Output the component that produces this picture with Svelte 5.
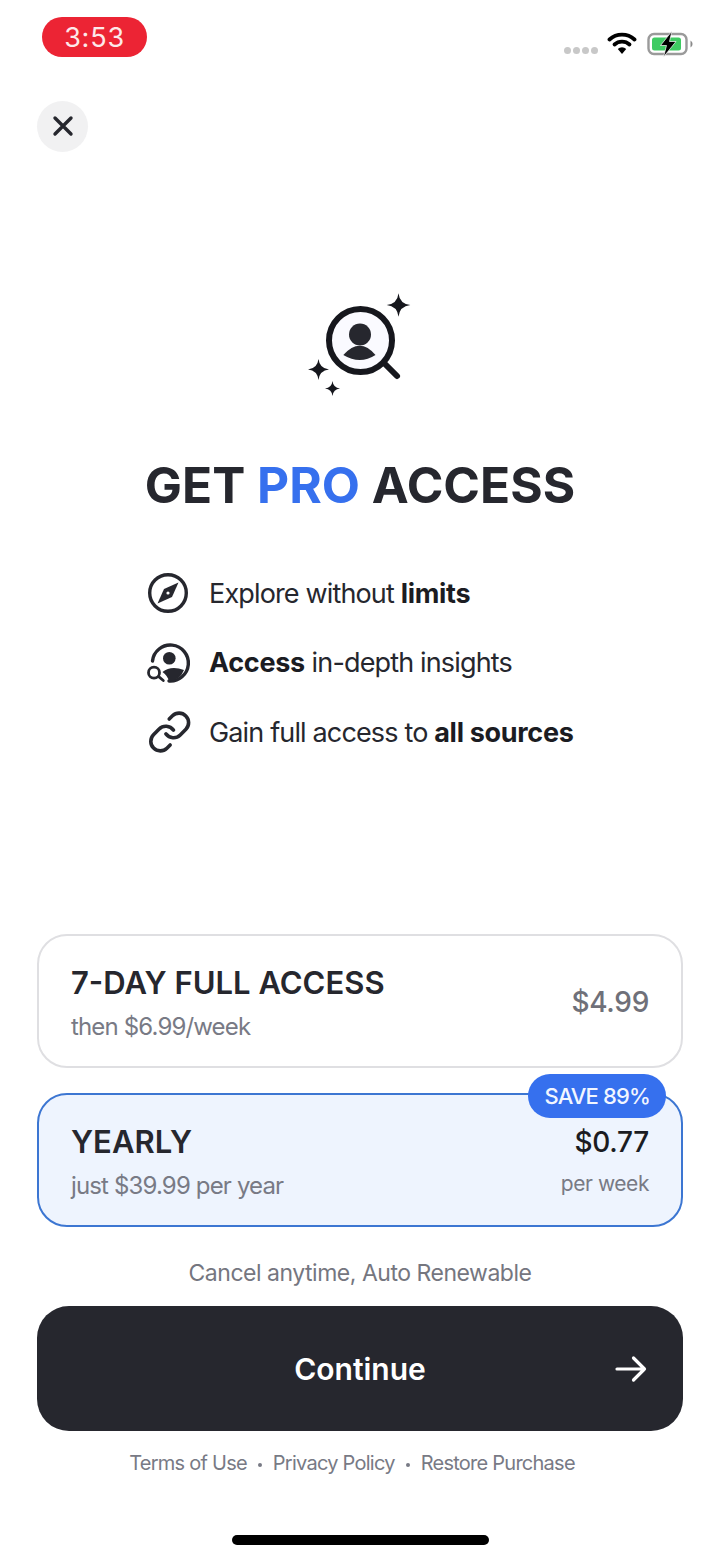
<script>
  const features = [
    { id: 'compass', parts: [['Explore without ', false], ['limits', true]] },
    { id: 'person', parts: [['Access', true], [' in-depth insights', false]] },
    { id: 'link', parts: [['Gain full access to ', false], ['all sources', true]] }
  ];

  function sparkle(x, y, r) {
    const k = r * 0.1;
    return `M${x} ${y - r} Q${x + k} ${y - k} ${x + r} ${y} Q${x + k} ${y + k} ${x} ${y + r} Q${x - k} ${y + k} ${x - r} ${y} Q${x - k} ${y - k} ${x} ${y - r} Z`;
  }
</script>

<div class="page">
  <header class="status">
    <div class="time">3:53</div>
    <div class="indicators">
      <div class="dots"><i></i><i></i><i></i><i></i></div>
      <svg class="wifi" width="30" height="24" viewBox="0 0 30 24">
        <path d="M2.500 8.500 A18.500 18.500 0 0 1 27.500 8.500" fill="none" stroke="#000" stroke-width="3.800" stroke-linecap="round"/>
        <path d="M7.500 13.500 A11 11 0 0 1 22.500 13.500" fill="none" stroke="#000" stroke-width="3.800" stroke-linecap="round"/>
        <path d="M15 23 L10.800 18 A6 6 0 0 1 19.200 18 Z" fill="#000"/>
      </svg>
      <svg class="battery" width="48" height="28" viewBox="0 0 48 28">
        <rect x="1.500" y="4" width="38" height="20" rx="5.500" fill="none" stroke="#9a9a9a" stroke-width="2.400"/>
        <rect x="5" y="7.500" width="29" height="13" rx="2.500" fill="#3ecb62"/>
        <path d="M43.500 10.500 a4 4 0 0 1 0 7 z" fill="#8a8a8a"/>
        <path d="M25 1 L13.500 15.500 L19.500 15.500 L16.500 27 L29 11.500 L22.500 11.500 Z" fill="#000" stroke="#fff" stroke-width="0.700"/>
      </svg>
    </div>
  </header>

  <button class="close" aria-label="Close">
    <svg width="22" height="22" viewBox="0 0 22 22">
      <path d="M3 3 L19 19 M19 3 L3 19" stroke="#26272e" stroke-width="3.400" stroke-linecap="round"/>
    </svg>
  </button>

  <div class="hero">
    <svg width="110" height="112" viewBox="0 0 110 112">
      <circle cx="52.500" cy="54.500" r="31.500" fill="#fafaff" stroke="#16171d" stroke-width="6"/>
      <path d="M76 77 L89 90" stroke="#16171d" stroke-width="6" stroke-linecap="round"/>
      <circle cx="52" cy="48.500" r="11" fill="#26272e"/>
      <path d="M35.300 69 Q52 50.500 67.500 69 Q52 79 35.300 69 Z" fill="#26272e"/>
      <path d={sparkle(90.500, 19, 11.800)} fill="#16171d"/>
      <path d={sparkle(10.500, 83.500, 10.500)} fill="#16171d"/>
      <path d={sparkle(24.500, 102.500, 7.500)} fill="#16171d"/>
    </svg>
  </div>

  <h1>GET <span>PRO</span> ACCESS</h1>

  <ul class="features">
    {#each features as f}
      <li>
        <svg class="ficon" width="46" height="46" viewBox="0 0 46 46">
          {#if f.id === 'compass'}
            <circle cx="23" cy="23" r="18.300" fill="none" stroke="#26272e" stroke-width="3.400"/>
            <path d="M33.500 12.500 L27 27 L12.500 33.500 L19 19 Z" fill="#26272e"/>
            <circle cx="23" cy="23" r="1.600" fill="#fff"/>
          {:else if f.id === 'person'}
            <path d="M7.500 21 A18 18 0 1 1 24 41" fill="none" stroke="#26272e" stroke-width="3.400" stroke-linecap="round"/>
            <circle cx="24.300" cy="18.300" r="6.300" fill="#26272e"/>
            <path d="M17.500 32 Q26 25 39 30 A18 18 0 0 1 24 41.500 Q23 36 17.500 32 Z" fill="#26272e"/>
            <circle cx="9" cy="32.700" r="5.500" fill="#fff" stroke="#26272e" stroke-width="2.800"/>
            <path d="M13.700 36.700 L18.300 40.500" stroke="#26272e" stroke-width="2.800" stroke-linecap="round"/>
          {:else}
            <g transform="translate(24.700 23) scale(1.900) translate(-12 -12)" fill="none" stroke="#26272e" stroke-width="1.900" stroke-linecap="round" stroke-linejoin="round">
              <path d="M10 13a5 5 0 0 0 7.540.54l3-3a5 5 0 0 0-7.070-7.070l-1.720 1.710"/>
              <path d="M14 11a5 5 0 0 0-7.540-.54l-3 3a5 5 0 0 0 7.070 7.070l1.710-1.710"/>
            </g>
          {/if}
        </svg>
        <span class="ftext">{#each f.parts as p}{#if p[1]}<b>{p[0]}</b>{:else}{p[0]}{/if}{/each}</span>
      </li>
    {/each}
  </ul>

  <div class="plans">
    <div class="plan">
      <div class="col">
        <div class="name">7-DAY FULL ACCESS</div>
        <div class="sub">then $6.99/week</div>
      </div>
      <div class="price muted">$4.99</div>
    </div>
    <div class="plan selected">
      <div class="badge">SAVE 89%</div>
      <div class="col">
        <div class="name">YEARLY</div>
        <div class="sub">just $39.99 per year</div>
      </div>
      <div class="col right">
        <div class="price">$0.77</div>
        <div class="sub small">per week</div>
      </div>
    </div>
  </div>

  <p class="cancel">Cancel anytime, Auto Renewable</p>

  <button class="cta">
    <span>Continue</span>
    <svg width="34" height="28" viewBox="0 0 34 28">
      <path d="M3 14 H30.500 M19.500 3 L30.500 14 L19.500 25" fill="none" stroke="#fff" stroke-width="3.200" stroke-linecap="round" stroke-linejoin="round"/>
    </svg>
  </button>

  <footer class="links">
    <span>Terms of Use</span><i></i><span>Privacy Policy</span><i></i><span>Restore Purchase</span>
  </footer>

  <div class="home"></div>
</div>

<style>
  :global(body) { margin: 0; background: #fff; }
  .page {
    width: 720px;
    height: 1560px;
    box-sizing: border-box;
    padding: 17px 37px 0;
    background: #fff;
    font-family: Inter, "Liberation Sans", sans-serif;
    color: #26272e;
    display: flex;
    flex-direction: column;
    overflow: hidden;
  }
  .status {
    display: flex;
    justify-content: space-between;
    align-items: flex-start;
    height: 84px;
    margin-right: -15px;
    padding: 0 3px 0 5px;
  }
  .time {
    width: 105px;
    height: 40px;
    border-radius: 20px;
    background: #ec2434;
    color: #fde9ea;
    font-size: 27px;
    letter-spacing: 0.800px;
    line-height: 42px;
    text-align: center;
  }
  .indicators {
    display: flex;
    align-items: center;
    margin-top: 13px;
  }
  .dots { display: flex; gap: 2px; margin-top: 13px; margin-right: 10px; }
  .dots i { width: 7px; height: 7px; border-radius: 50%; background: #c8c8c8; display: block; }
  .wifi { margin: -2px 10px 0 -1px; }
  .close {
    width: 51px;
    height: 51px;
    border: 0;
    padding: 0 0 2px;
    border-radius: 50%;
    background: #f1f1f2;
    display: flex;
    align-items: center;
    justify-content: center;
  }
  .hero {
    margin-top: 134px;
    display: flex;
    justify-content: center;
    padding-left: 6px;
    height: 112px;
  }
  h1 {
    margin: 57px 0 0;
    font-size: 49.600px;
    line-height: 60px;
    font-weight: 700;
    text-align: center;
    color: #26272e;
    letter-spacing: 0;
  }
  h1 span { color: #3670ee; }
  .features {
    list-style: none;
    margin: 55px 0 0;
    padding: 0 0 0 108px;
    display: flex;
    flex-direction: column;
    gap: 23.500px;
  }
  .features li {
    display: flex;
    align-items: center;
    height: 46px;
    gap: 18px;
  }
  .ftext { font-size: 27px; color: #26272e; white-space: pre; letter-spacing: -0.850px; }
  .ftext b { font-weight: 700; color: #1b1c22; letter-spacing: -0.300px; }
  .plans {
    margin-top: 179px;
    display: flex;
    flex-direction: column;
    gap: 25px;
  }
  .plan {
    position: relative;
    box-sizing: border-box;
    height: 134px;
    border-radius: 30px;
    border: 2px solid #dfdfe2;
    padding: 0 32px;
    display: flex;
    justify-content: space-between;
    align-items: center;
  }
  .plan.selected {
    background: #eef4fe;
    border-color: #3c76d2;
  }
  .col { display: flex; flex-direction: column; gap: 11px; padding-top: 5px; }
  .col.right { align-items: flex-end; gap: 9px; padding-top: 3px; }
  .name { font-size: 31px; line-height: 36px; font-weight: 600; color: #26272e; }
  .sub { font-size: 24px; line-height: 30px; color: #787a85; letter-spacing: -0.850px; }
  .sub.small { font-size: 21px; letter-spacing: -0.450px; }
  .price { font-size: 28px; line-height: 36px; font-weight: 500; color: #1b1c22; letter-spacing: -0.300px; }
  .price.muted { color: #6f7079; padding-top: 2px; }
  .badge {
    position: absolute;
    top: -21px;
    right: 15px;
    height: 44px;
    line-height: 44px;
    padding: 0 16px;
    border-radius: 22px;
    background: #3670ee;
    color: #f2f6ff;
    font-size: 22px;
    font-weight: 500;
    letter-spacing: -0.850px;
  }
  .cancel {
    margin: 29px 0 0;
    text-align: center;
    font-size: 23px;
    line-height: 34px;
    letter-spacing: -0.480px;
    color: #75767f;
  }
  .cta {
    margin-top: 16px;
    height: 125px;
    border: 0;
    border-radius: 32px;
    background: #26272e;
    color: #fff;
    position: relative;
    font-family: inherit;
    font-size: 30px;
    font-weight: 600;
    display: flex;
    align-items: center;
    justify-content: center;
    flex: none;
  }
  .cta svg { position: absolute; right: 35px; top: 49px; }
  .links {
    margin-top: 18px;
    padding-right: 16px;
    display: flex;
    justify-content: center;
    align-items: center;
    gap: 11px;
    font-size: 20px;
    line-height: 28px;
    letter-spacing: -0.750px;
    color: #787a85;
  }
  .links i { width: 4px; height: 4px; border-radius: 50%; background: #787a85; display: block; margin-top: 3px; }
  .home {
    margin: 58px auto 0;
    width: 257px;
    height: 10px;
    border-radius: 5px;
    background: #000;
    flex: none;
  }
</style>
